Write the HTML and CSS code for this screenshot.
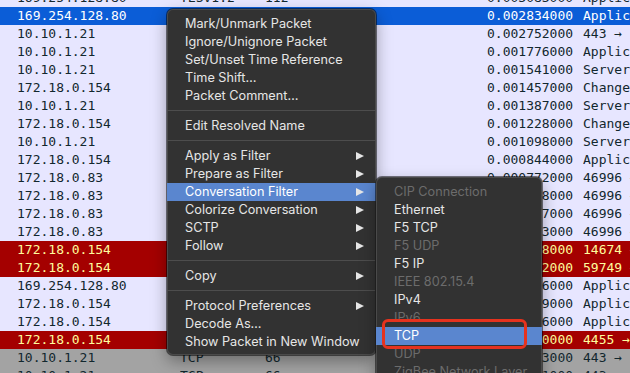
FILE: index.html
```html
<!DOCTYPE html>
<html lang="en">
<head>
  <meta charset="UTF-8">
  <title>Packet list - context menu</title>
  <link rel="stylesheet" href="styles.css">
</head>
<body>
  <div class="packet-list">
    <div class="row"><span>169.254.128.80</span><span>TLSv1.2</span><span>112</span><span>0.003083000</span><span>Application Data</span></div>
    <div class="row selected"><span>169.254.128.80</span><span>TLSv1.2</span><span>112</span><span>0.002834000</span><span>Application Data</span></div>
    <div class="row"><span>10.10.1.21</span><span>TCP</span><span>66</span><span>0.002752000</span><span>443 → 52344 [ACK]</span></div>
    <div class="row"><span>10.10.1.21</span><span>TLSv1.2</span><span>112</span><span>0.001776000</span><span>Application Data</span></div>
    <div class="row"><span>10.10.1.21</span><span>TLSv1.2</span><span>220</span><span>0.001541000</span><span>Server Hello</span></div>
    <div class="row"><span>172.18.0.154</span><span>TLSv1.2</span><span>117</span><span>0.001457000</span><span>Change Cipher Spec</span></div>
    <div class="row"><span>10.10.1.21</span><span>TLSv1.2</span><span>220</span><span>0.001387000</span><span>Server Hello</span></div>
    <div class="row"><span>172.18.0.154</span><span>TLSv1.2</span><span>117</span><span>0.001228000</span><span>Change Cipher Spec</span></div>
    <div class="row"><span>10.10.1.21</span><span>TLSv1.2</span><span>220</span><span>0.001098000</span><span>Server Hello</span></div>
    <div class="row"><span>172.18.0.154</span><span>TLSv1.2</span><span>112</span><span>0.000844000</span><span>Application Data</span></div>
    <div class="row"><span>172.18.0.83</span><span>TCP</span><span>66</span><span>0.000772000</span><span>46996 → 443 [ACK]</span></div>
    <div class="row"><span>172.18.0.83</span><span>TCP</span><span>66</span><span>0.000748000</span><span>46996 → 443 [ACK]</span></div>
    <div class="row"><span>172.18.0.83</span><span>TCP</span><span>66</span><span>0.000727000</span><span>46996 → 443 [ACK]</span></div>
    <div class="row"><span>172.18.0.83</span><span>TCP</span><span>66</span><span>0.000683000</span><span>46996 → 443 [ACK]</span></div>
    <div class="row bad"><span>172.18.0.154</span><span>TCP</span><span>66</span><span>0.000658000</span><span>14674 → 443 [RST]</span></div>
    <div class="row bad"><span>172.18.0.154</span><span>TCP</span><span>66</span><span>0.000612000</span><span>59749 → 443 [RST]</span></div>
    <div class="row"><span>169.254.128.80</span><span>TLSv1.2</span><span>112</span><span>0.000586000</span><span>Application Data</span></div>
    <div class="row"><span>172.18.0.154</span><span>TLSv1.2</span><span>112</span><span>0.000559000</span><span>Application Data</span></div>
    <div class="row"><span>172.18.0.154</span><span>TLSv1.2</span><span>112</span><span>0.000516000</span><span>Application Data</span></div>
    <div class="row bad"><span>172.18.0.154</span><span>TCP</span><span>66</span><span>0.000470000</span><span>4455 → 443 [RST]</span></div>
    <div class="row syn"><span>10.10.1.21</span><span>TCP</span><span>66</span><span>0.000413000</span><span>443 → 4455 [FIN]</span></div>
    <div class="row syn"><span>10.10.1.21</span><span>TCP</span><span>66</span><span>0.000361000</span><span>443 → 59749 [FIN]</span></div>
  </div>

  <!-- Right-click menu -->
  <div class="menu main-menu">
    <div class="item">Mark/Unmark Packet</div>
    <div class="item">Ignore/Unignore Packet</div>
    <div class="item">Set/Unset Time Reference</div>
    <div class="item">Time Shift…</div>
    <div class="item">Packet Comment…</div>
    <div class="sep"></div>
    <div class="item">Edit Resolved Name</div>
    <div class="sep"></div>
    <div class="item sub">Apply as Filter</div>
    <div class="item sub">Prepare as Filter</div>
    <div class="item sub active">Conversation Filter</div>
    <div class="item sub">Colorize Conversation</div>
    <div class="item sub">SCTP</div>
    <div class="item sub">Follow</div>
    <div class="sep"></div>
    <div class="item sub">Copy</div>
    <div class="sep"></div>
    <div class="item sub">Protocol Preferences</div>
    <div class="item">Decode As…</div>
    <div class="item">Show Packet in New Window</div>
  </div>

  <div class="menu sub-menu">
    <div class="item disabled">CIP Connection</div>
    <div class="item">Ethernet</div>
    <div class="item">F5 TCP</div>
    <div class="item disabled">F5 UDP</div>
    <div class="item">F5 IP</div>
    <div class="item disabled">IEEE 802.15.4</div>
    <div class="item">IPv4</div>
    <div class="item disabled">IPv6</div>
    <div class="item active">TCP</div>
    <div class="item disabled">UDP</div>
    <div class="item disabled">ZigBee Network Layer</div>
  </div>

  <div class="callout"></div>
</body>
</html>
```

FILE: styles.css
```css
html, body {
  margin: 0;
  height: 373px;
  overflow: hidden;
}

body {
  position: relative;
  background: #e7e6ff;
}

/* Packet list */
.packet-list {
  margin-top: -11px;
  font-family: 'DejaVu Sans Mono', monospace;
  font-size: 13px;
}

.row {
  display: grid;
  grid-template-columns: 163px 85px 222px 96px 1fr;
  height: 18px;
  line-height: 18px;
  padding-left: 17px;
  background: #e7e6ff;
  color: #12272e;
  white-space: nowrap;
  overflow: hidden;
}

.row span {
  overflow: hidden;
}

.row.selected {
  background: #0b5dd7;
  color: #ffffff;
}

.row.bad {
  background: #a40000;
  color: #fffc9c;
}

.row.syn {
  background: #a3a3a3;
  color: #12272e;
}

/* Menus */
.menu {
  position: absolute;
  box-sizing: border-box;
  background: #323232;
  border-radius: 6px;
  font-family: 'Inter', 'Liberation Sans', sans-serif;
  font-size: 12.7px;
  color: #e6e6e6;
  box-shadow: 0 0 0 1px rgba(0, 0, 0, 0.5), inset 0 0 0 1px rgba(255, 255, 255, 0.12), 0 6px 16px rgba(0, 0, 0, 0.35);
}

.main-menu {
  left: 167px;
  top: 9px;
  width: 209px;
  padding: 6px 0 4px;
}

.sub-menu {
  left: 376px;
  top: 177px;
  width: 166px;
  padding: 6px 0;
}

.item {
  position: relative;
  height: 18px;
  line-height: 18px;
  padding-left: 18px;
  white-space: nowrap;
}

.item.sub::after {
  content: '';
  position: absolute;
  right: 12px;
  top: 4.5px;
  border-left: 8px solid #e6e6e6;
  border-top: 4.5px solid transparent;
  border-bottom: 4.5px solid transparent;
}

.item.active {
  background: #5a86cf;
  color: #ffffff;
}

.item.disabled {
  color: #6c6c6c;
}

.sep {
  height: 1px;
  margin: 5px 0 6px;
  background: #4d4d4d;
}

/* Red annotation box */
.callout {
  position: absolute;
  left: 382px;
  top: 319px;
  width: 145px;
  height: 30px;
  box-sizing: border-box;
  border: 3px solid #e6321e;
  border-radius: 6px;
}
```
